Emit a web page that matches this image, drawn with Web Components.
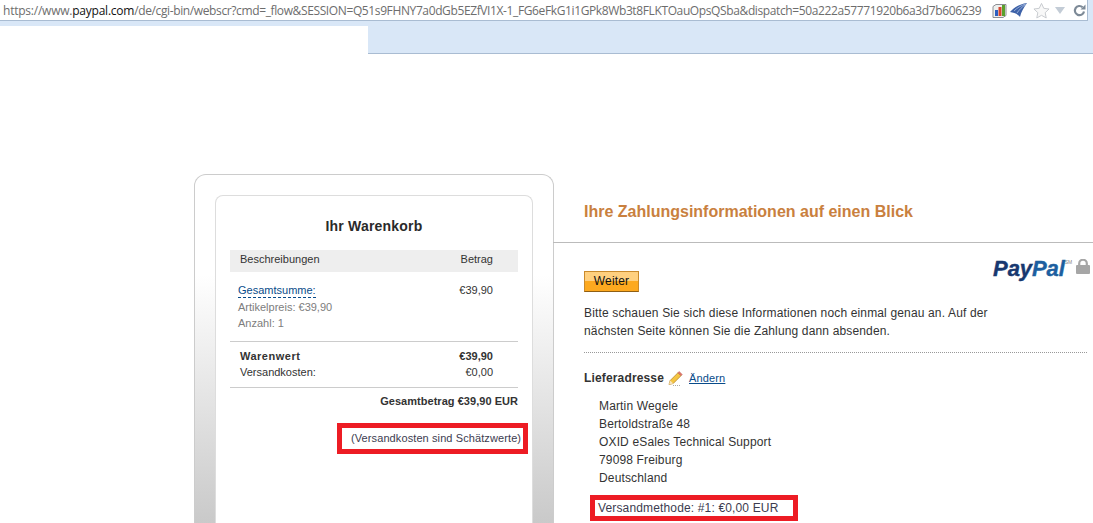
<!DOCTYPE html>
<html lang="de">
<head>
<meta charset="utf-8">
<title>PayPal</title>
<style>
    html, body {
        margin: 0;
        padding: 0;
        height: 523px;
        overflow: hidden;
        background: #fff;
        font-family: "Liberation Sans", Arial, sans-serif;
    }
</style>
</head>
<body>
<browser-bar></browser-bar>
<page-layout>
    <cart-panel slot="left"></cart-panel>
    <payment-info slot="right"></payment-info>
</page-layout>

<script>
class BrowserBar extends HTMLElement {
    constructor() {
        super();
        this.shadowDOM = this.attachShadow({mode: "open"});
    }

    connectedCallback(){
        this.shadowDOM.innerHTML = `
        <style>
            * { box-sizing: border-box; margin: 0; padding: 0; }
            :host {
                display: block;
                height: 54px;
                background: #fff;
            }
            .url-row {
                display: flex;
                align-items: center;
                height: 21px;
                background: #fff;
                border-bottom: 1px solid #a9bcd2;
                border-right: 1px solid #a9bcd2;
                width: 1088px;
                padding-left: 3px;
                font: 12px "Open Sans", sans-serif;
                color: #6d6d6d;
                white-space: nowrap;
            }
            .url { flex: none; width: 983px; letter-spacing: -0.23px; }
            .url span { letter-spacing: -0.38px; }
            b { color: #111; font-weight: 400; }
            .tools { display: flex; align-items: center; margin-left: 6px; }
            .strip { height: 5px; background: #d9e7f7; }
            .tab {
                margin-left: 368px;
                height: 28px;
                background: #d9e7f7;
                border-bottom: 1px solid #a9bcd2;
            }
            .side {
                position: absolute;
                left: 1088px;
                right: 0;
                top: 0;
                height: 25px;
                background: #d9e7f7;
            }
        </style>
        <div class="url-row">
            <div class="url">https://www.<b>paypal.com</b><span>/de/cgi-bin/webscr?cmd=_flow&amp;SESSION=Q51s9FHNY7a0dGb5EZfVI1X-1_FG6eFkG1i1GPk8Wb3t8FLKTOauOpsQSba&amp;dispatch=50a222a57771920b6a3d7b606239</span></div>
            <div class="tools">
                <svg width="15" height="15" viewBox="0 0 15 15"><path d="M1 3.500 4 1.500h10v11l-3 2H1Z" fill="#eef0ee" stroke="#8d8f94"/><rect x="3" y="7" width="3" height="6" fill="#2c5fc0"/><rect x="6.500" y="4" width="3" height="9" fill="#d8452e"/><rect x="10" y="2" width="3" height="11" fill="#5aa02c"/></svg>
                <svg width="17" height="16" viewBox="0 0 17 16" style="margin-left:3px"><path d="M0 10C4 5 10 2 17 1 14 5 11 10 10 15 8 12 4 10.500 0 10Z" fill="#3e62a8"/><path d="M4 9C7 6 11 3.500 15.500 2M7 11C9 8 12 5 15.500 2.500" stroke="#a9bee0" stroke-width=".8" fill="none"/></svg>
                <svg width="17" height="17" viewBox="0 0 18 17" style="margin-left:6px"><path d="M9 1l2.400 5.200 5.600.7-4.100 3.900 1.100 5.600L9 13.600l-5 2.800 1.100-5.600L1 6.900l5.600-.7Z" fill="#f8f8f8" stroke="#c6c9cd"/></svg>
                <svg width="10" height="8" viewBox="0 0 10 8" style="margin-left:5px"><path d="M0 1h10L5 8Z" fill="#c3ccd6"/></svg>
                <svg width="13" height="13" viewBox="0 0 13 13" style="margin-left:8px"><path d="M11 7.500A4.600 4.600 0 1 1 9.600 3.200" fill="none" stroke="#7d8a97" stroke-width="2.200"/><path d="M7.500 5.500H12.500V.5Z" fill="#7d8a97"/></svg>
            </div>
        </div>
        <div class="side"></div>
        <div class="strip"></div>
        <div class="tab"></div>`;
    }
}

class PageLayout extends HTMLElement {
    constructor() {
        super();
        this.shadowDOM = this.attachShadow({mode: "open"});
    }

    connectedCallback(){
        this.shadowDOM.innerHTML = `
        <style>
            :host {
                display: grid;
                grid-template-columns: 554px 1fr;
                height: 349px;
                overflow: hidden;
                padding-top: 120px;
            }
            .left { padding-left: 194px; }
        </style>
        <div class="left"><slot name="left"></slot></div>
        <div><slot name="right"></slot></div>`;
    }
}

class RedMark extends HTMLElement {
    constructor() {
        super();
        this.shadowDOM = this.attachShadow({mode: "open"});
    }

    connectedCallback(){
        this.shadowDOM.innerHTML = `
        <style>
            :host {
                display: inline-block;
                box-sizing: border-box;
                border: 5px solid #ed1c24;
                color: #3c3c50;
                background: #fff;
            }
        </style>
        <slot></slot>`;
    }
}

class CartPanel extends HTMLElement {
    constructor() {
        super();
        this.shadowDOM = this.attachShadow({mode: "open"});
    }

    connectedCallback(){
        this.shadowDOM.innerHTML = `
        <style>
            * { box-sizing: border-box; margin: 0; padding: 0; }
            :host {
                display: block;
                height: 349px;
                padding: 20px 20px 0;
                border: 1px solid #ccc;
                border-bottom: 0;
                border-radius: 12px 12px 0 0;
                background: linear-gradient(#fff 0, #fff 100px, #c9c9c9 349px);
                font-size: 11px;
                color: #333;
            }
            .inner {
                height: 329px;
                padding: 0 14px;
                background: #fff;
                border: 1px solid #ddd;
                border-bottom: 0;
                border-radius: 8px 8px 0 0;
            }
            h2 {
                padding-top: 22px;
                height: 54px;
                font-size: 14px;
                line-height: 16px;
                letter-spacing: 0.2px;
                text-align: center;
                color: #2a2a2a;
            }
            .head {
                display: flex;
                justify-content: space-between;
                height: 22px;
                padding: 3px 25px 0 10px;
                line-height: 12px;
                background: #eee;
            }
            .item {
                display: flex;
                justify-content: space-between;
                height: 70px;
                padding: 10px 25px 0 8px;
                border-bottom: 1px solid #ccc;
                line-height: 17px;
            }
            .link {
                display: block;
                width: max-content;
                height: 15px;
                line-height: 15px;
                margin-top: 1px;
                margin-bottom: 1px;
                color: #084b8a;
                border-bottom: 1px dashed #084b8a;
            }
            .muted { color: #7d7d7d; }
            .muted + .muted { margin-top: -1px; }
            .totals {
                height: 46px;
                padding: 7px 25px 0 10px;
                border-bottom: 1px solid #ccc;
                line-height: 15px;
            }
            .totals .line + .line { margin-top: 1px; }
            .totals b:first-child { letter-spacing: 0.5px; }
            .line { display: flex; justify-content: space-between; }
            .grand {
                padding-top: 7px;
                height: 35px;
                text-align: right;
                font-weight: bold;
                line-height: 13px;
                letter-spacing: 0.04px;
            }
            .note { display: flex; justify-content: flex-end; margin-right: -10px; }
            red-mark {
                display: block;
                width: 191px;
                height: 31px;
                padding: 3px 0 0 9px;
                line-height: 15px;
                letter-spacing: 0.1px;
                white-space: nowrap;
            }
        </style>
        <div class="inner">
            <h2>Ihr Warenkorb</h2>
            <div class="head"><span>Beschreibungen</span><span>Betrag</span></div>
            <div class="item">
                <div>
                    <span class="link">Gesamtsumme:</span>
                    <div class="muted">Artikelpreis: €39,90</div>
                    <div class="muted">Anzahl: 1</div>
                </div>
                <div>€39,90</div>
            </div>
            <div class="totals">
                <div class="line"><b>Warenwert</b><b>€39,90</b></div>
                <div class="line"><span>Versandkosten:</span><span>€0,00</span></div>
            </div>
            <div class="grand">Gesamtbetrag €39,90 EUR</div>
            <div class="note"><red-mark>(Versandkosten sind Schätzwerte)</red-mark></div>
        </div>`;
    }
}

class PaymentInfo extends HTMLElement {
    constructor() {
        super();
        this.shadowDOM = this.attachShadow({mode: "open"});
    }

    connectedCallback(){
        this.shadowDOM.innerHTML = `
        <style>
            * { box-sizing: border-box; margin: 0; padding: 0; }
            :host {
                display: block;
                font-size: 12px;
                letter-spacing: 0.15px;
                color: #333;
            }
            h1 {
                height: 69px;
                margin-left: -1px;
                padding: 29px 0 0 31px;
                font-size: 16px;
                line-height: 18px;
                letter-spacing: 0;
                color: #c9803e;
                border-bottom: 1px solid #bbb;
            }
            .body { padding: 0 3px 0 30px; }
            .top {
                display: flex;
                justify-content: space-between;
                align-items: flex-start;
                padding-top: 12px;
            }
            .btn {
                width: 55px;
                height: 21px;
                margin-top: 16px;
                text-align: center;
                line-height: 19px;
                color: #111;
                border: 1px solid #c98a2c;
                border-bottom-color: #8f5f14;
                background: linear-gradient(#ffd07f 0, #ffd07f 50%, #fda91f 50%, #fda91f 100%);
            }
            .logo { display: flex; align-items: flex-start; gap: 4px; }
            .pp {
                font: italic bold 22px/24px "Liberation Sans", sans-serif;
                color: #17386f;
                letter-spacing: -0.1px;
                margin-top: 2px;
                -webkit-text-stroke: 0.4px currentColor;
            }
            .pp span { color: #1c5fa0; }
            .pp sup { font-size: 5px; font-style: normal; font-weight: normal; color: #888; vertical-align: 12px; line-height: 0; -webkit-text-stroke: 0; }
            .logo svg { margin-top: 4px; }
            p { margin-top: 12px; width: 420px; line-height: 18px; }
            .dots { margin-top: 12px; border-top: 1px dotted #999; width: 503px; }
            .ship { display: flex; align-items: center; height: 18px; margin-top: 16px; }
            .ship b { margin-right: 4px; }
            .ship a { margin-left: 6px; font-size: 11px; color: #084b8a; text-decoration: underline; }
            address { margin: 10px 0 0 15px; font-style: normal; line-height: 18px; }
            red-mark {
                display: block;
                width: 208px;
                height: 26px;
                margin: 8px 0 0 6px;
                padding-left: 3px;
                line-height: 17px;
                white-space: nowrap;
            }
        </style>
        <h1>Ihre Zahlungsinformationen auf einen Blick</h1>
        <div class="body">
            <div class="top">
                <div class="btn">Weiter</div>
                <div class="logo">
                    <span class="pp">Pay<span>Pal</span><sup>SM</sup></span>
                    <svg width="14" height="15" viewBox="0 0 14 15"><path d="M3.200 7V4.500a3.800 3.800 0 0 1 7.600 0V7" fill="none" stroke="#a6a6a6" stroke-width="2.200"/><rect x="0" y="6" width="14" height="9" rx="1" fill="#a6a6a6"/></svg>
                </div>
            </div>
            <p>Bitte schauen Sie sich diese Informationen noch einmal genau an. Auf der nächsten Seite können Sie die Zahlung dann absenden.</p>
            <div class="dots"></div>
            <div class="ship">
                <b>Lieferadresse</b>
                <svg width="15" height="15" viewBox="0 0 15 15"><path d="M1 13.500 2.200 9.500 10 1.700l3 3-7.800 7.800Z" fill="#f4c542" stroke="#b8862a" stroke-width=".8"/><path d="M10 1.700l1.200-1.200 3 3-1.200 1.200Z" fill="#e2766b" stroke="#b5584f" stroke-width=".5"/><path d="M1 13.500 2.200 9.500 5.200 12.500Z" fill="#f7e3bd"/><path d="M5 14.500h8" stroke="#aaa" stroke-dasharray="1 1"/></svg>
                <a>Ändern</a>
            </div>
            <address>Martin Wegele<br>Bertoldstraße 48<br>OXID eSales Technical Support<br>79098 Freiburg<br>Deutschland</address>
            <red-mark>Versandmethode: #1: €0,00 EUR</red-mark>
        </div>`;
    }
}

customElements.define("red-mark", RedMark);
customElements.define("browser-bar", BrowserBar);
customElements.define("page-layout", PageLayout);
customElements.define("cart-panel", CartPanel);
customElements.define("payment-info", PaymentInfo);
</script>
</body>
</html>
